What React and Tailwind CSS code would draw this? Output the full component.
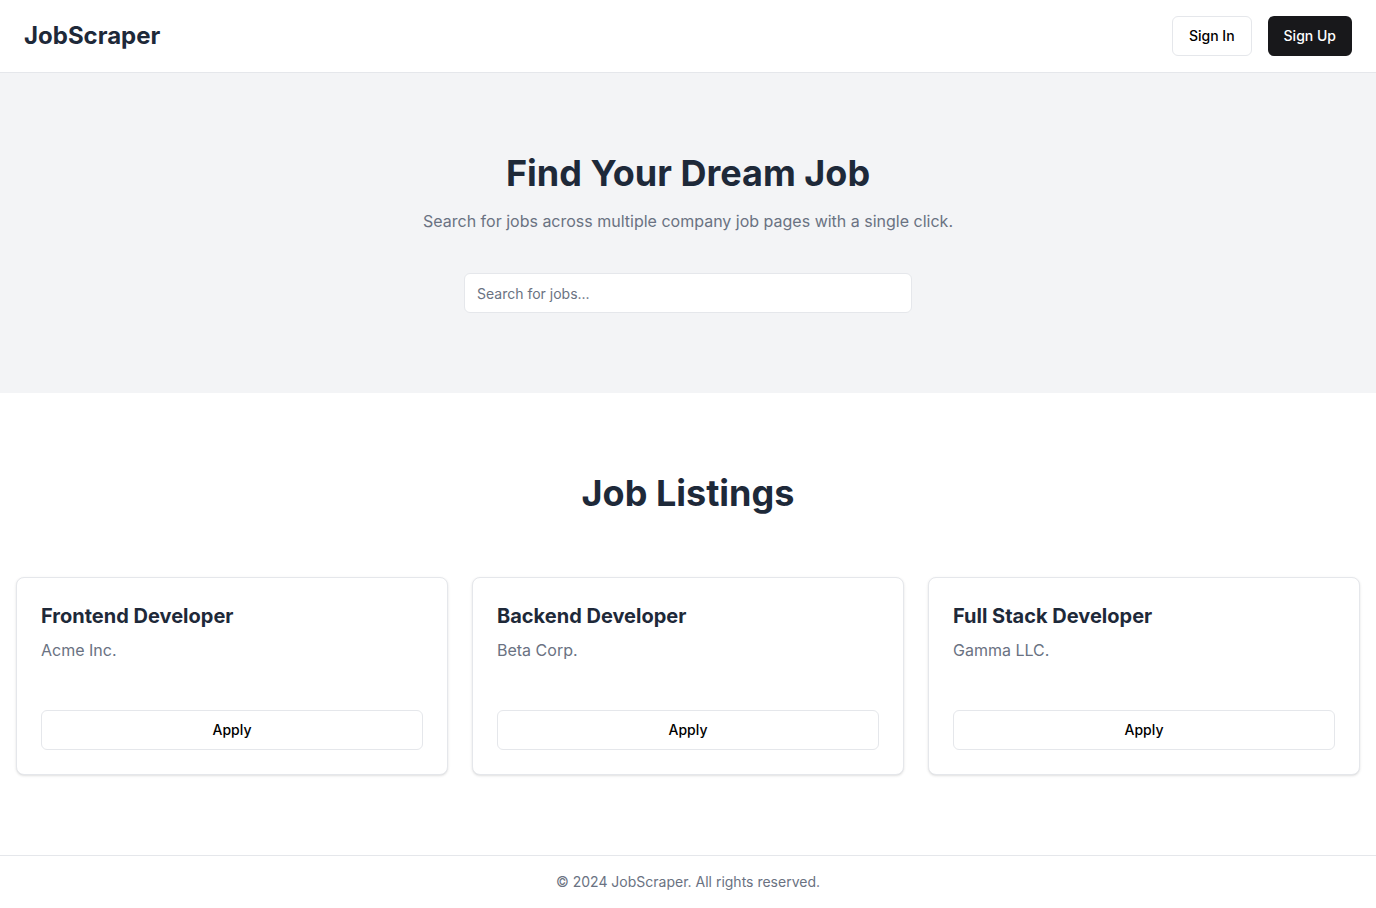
const jobs = [
  { id: 1, title: "Frontend Developer", company: "Acme Inc." },
  { id: 2, title: "Backend Developer", company: "Beta Corp." },
  { id: 3, title: "Full Stack Developer", company: "Gamma LLC." },
];

function JobCard({ job }) {
  return (
    <div className="rounded-lg border border-gray-200 bg-white p-6 shadow-sm">
      <h3 className="text-xl font-bold text-gray-800">{job.title}</h3>
      <p className="mt-2 text-base text-gray-500">{job.company}</p>
      <button className="mt-12 h-10 w-full rounded-md border border-gray-200 bg-white text-sm font-medium text-black">
        Apply
      </button>
    </div>
  );
}

export default function App() {
  return (
    <div className="min-h-screen bg-white font-['Inter',sans-serif]">
      {/* Header */}
      <header className="flex h-[73px] items-center justify-between border-b border-gray-200 px-6">
        <span className="text-2xl font-bold text-gray-800">JobScraper</span>
        <div className="flex items-center gap-4">
          <button className="h-10 rounded-md border border-gray-200 bg-white px-4 text-sm font-medium text-black">
            Sign In
          </button>
          <button className="h-10 rounded-md bg-[#18181b] px-4 text-sm font-medium text-white">
            Sign Up
          </button>
        </div>
      </header>

      {/* Hero */}
      <section className="bg-gray-100 py-20 text-center">
        <h1 className="text-4xl font-bold text-gray-800">Find Your Dream Job</h1>
        <p className="mt-4 text-base text-gray-500">
          Search for jobs across multiple company job pages with a single click.
        </p>
        <div className="mt-10 flex justify-center">
          <input
            type="text"
            placeholder="Search for jobs..."
            className="h-10 w-[448px] rounded-md border border-gray-200 bg-white px-3 text-sm text-gray-800 placeholder:text-gray-500"
          />
        </div>
      </section>

      {/* Listings */}
      <section className="px-4 py-20">
        <h2 className="text-center text-4xl font-bold text-gray-800">Job Listings</h2>
        <div className="mt-16 grid grid-cols-3 gap-6">
          {jobs.map((job) => (
            <JobCard key={job.id} job={job} />
          ))}
        </div>
      </section>

      {/* Footer */}
      <footer className="border-t border-gray-200 py-4 text-center text-sm text-gray-500">
        © 2024 JobScraper. All rights reserved.
      </footer>
    </div>
  );
}
